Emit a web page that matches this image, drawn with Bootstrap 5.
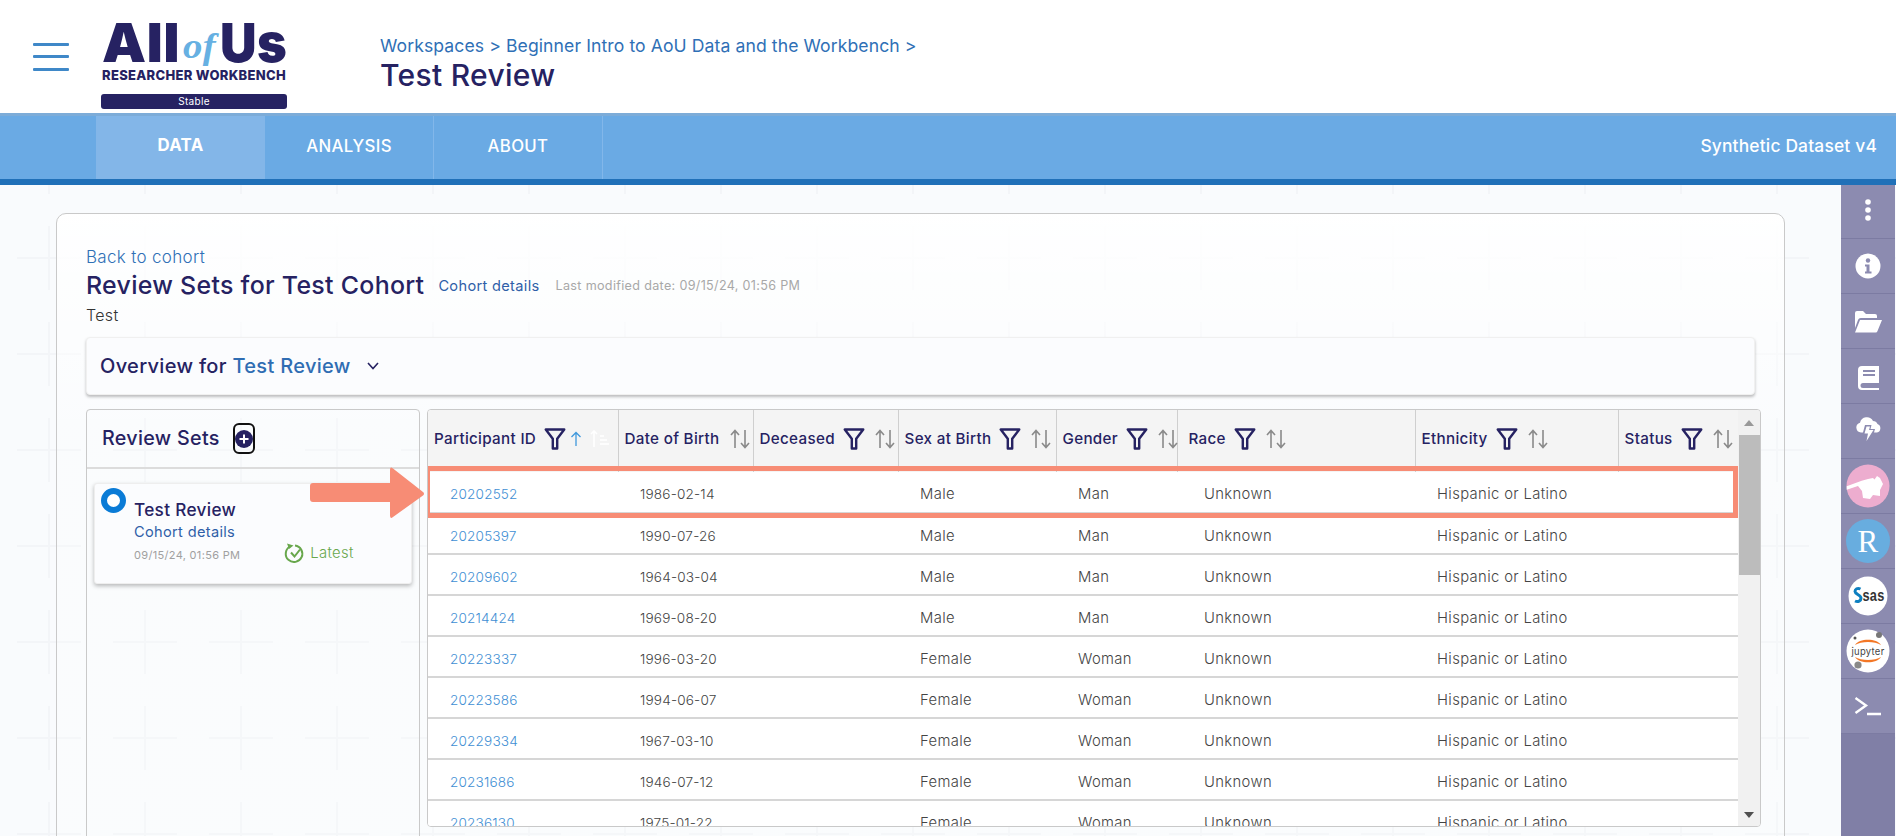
<!DOCTYPE html>
<html lang="en"><head><meta charset="utf-8"><title>Test Review</title>
<link href="https://cdn.jsdelivr.net/npm/bootstrap@5.3.0/dist/css/bootstrap.min.css" rel="stylesheet">
<style>
html,body{height:836px;overflow:hidden}
body{font-family:Inter,"Liberation Sans",sans-serif;color:#262262;background:#fff;letter-spacing:.02em}
a{text-decoration:none}
.top-head{height:113px;padding-left:33px}
.burger{width:36px;margin-right:31px}
.burger i{display:block;height:3px;background:#3f88c8;margin-bottom:9.5px;border-radius:1px}
.logo-box{width:190px;margin-right:91px;margin-left:-1px}
.logo-svg{display:block;width:190px;height:70px;margin-top:14px;overflow:visible}
.stable-bar{background:#262262;color:#fff;font-size:10px;height:15px;line-height:15px;border-radius:3px;text-align:center;width:186px;margin-left:2px;margin-top:10px}
.crumbs{color:#2f70b6;font-size:17.6px;font-weight:400;line-height:24px;letter-spacing:.005em}
.page-name{font-size:30px;font-weight:500;line-height:34px;color:#262262;letter-spacing:.01em}
.headtext{padding-top:34px}
.tabband{height:72px;background:#6aaae4;border-top:3px solid #7dacd8;border-bottom:6px solid #2070b8;color:#fff;padding-left:96px}
.tab-item{width:169px;height:63px;display:flex;align-items:center;justify-content:center;font-size:16.8px;font-weight:500;color:#fff;border-right:1px solid #82b7ea;padding-bottom:2px}
.tab-item.on{background:#83b6e8;font-weight:700;border-right:0;height:69px;border-bottom:6px solid #2070b8;margin-bottom:-6px;padding-bottom:4px}
.dataset{font-size:17.4px;font-weight:500;padding-right:19px;padding-bottom:2px;letter-spacing:.01em}
.work{height:651px;overflow:hidden;background-color:#f9fbfd;background-image:url("data:image/svg+xml,%3Csvg xmlns='http://www.w3.org/2000/svg' width='96' height='96'%3E%3Cpath d='M16 48h64M48 16v64' stroke='%23f3f5f8' stroke-width='2'/%3E%3C/svg%3E");background-position:1px 25px}
.pagepanel{margin:28px 56px 0 56px;flex:1;min-width:0;height:700px;border:1px solid #c9c9c9;border-radius:10px;padding:31px 24px 0 29px;background:linear-gradient(#fffffff2,#ffffff33 220px)}
.backlink{font-size:17px;font-weight:300;color:#2f70b6;line-height:24px}
.set-title{font-size:24.9px;font-weight:500;line-height:32px;letter-spacing:.012em}
.set-link{font-size:14.6px;color:#2f5fa8;margin-left:14px;padding-top:3px}
.set-date{font-size:12.6px;color:#a8a8a8;margin-left:16px;font-weight:400;padding-top:2px}
.desc{font-size:16px;color:#333;line-height:24px;margin-top:2px;font-weight:300}
.overview{height:58px;margin:10px 5px 0 0;background:#fbfcfe;border-radius:4px;box-shadow:0 2px 3px #00000040;border:1px solid #f0f0f0;padding-left:13px;font-size:20px;font-weight:500}
.overview span{color:#2f6db3}
.panes{margin-top:14px}
.leftpane{width:334px;height:500px;border:1px solid #c9c9c9;border-radius:4px 4px 0 0;margin-right:7px;flex:none}
.lefthead{height:59px;border-bottom:2px solid #dcdcdc;padding-left:15px;font-size:19.7px;font-weight:500}
.plusbtn{width:22px;height:31px;border:2px solid #111;border-radius:6px;margin-left:13px;display:flex;align-items:center;justify-content:center}
.setcard{margin:14px 7px 0 7px;height:101px;border-radius:3px;box-shadow:0 2px 4px #00000045;border:1px solid #eee;background:#fbfcfe;padding:4px 0 0 6px}
.radiomark{width:25px;height:25px;border:6px solid #0a7bd6;border-radius:50%;background:#fff;flex:none;margin-right:8px}
.set-name{font-size:17.2px;font-weight:500;line-height:22px;margin-top:11px}
.set-sub{font-size:14.6px;color:#2f5fa8;line-height:22px}
.set-stamp{font-size:11px;color:#a0a0a0;line-height:24px;font-weight:400}
.latest{color:#68a74c;font-size:14.8px;font-weight:300;margin-left:44px;position:relative;top:-2px}
.rightpane{width:1334px;height:418px;flex:none;border:1px solid #c9c9c9;border-radius:4px;overflow:hidden;background:#fff;position:relative}
.gridbox{width:1310px;flex:none}
.grid-t{table-layout:fixed;width:1310px;border-collapse:collapse;margin:0}
.grid-t th{height:62px;background:#f4f4f4;border-right:1px solid #cfcfcf;font-size:15.2px;font-weight:500;color:#262262;padding:0 0 3px 6px;vertical-align:middle;border-bottom:0;white-space:nowrap;box-shadow:none}
.grid-t th.rh{padding-left:11px}
.grid-t td{height:41px;padding:5px 0 0 22px;border:0;border-bottom:2px solid #d6d6d6;font-size:14.8px;font-weight:300;color:#444;vertical-align:middle;background:#fff;box-shadow:none;letter-spacing:.025em;white-space:nowrap}
.grid-t td:first-child{padding-left:22px}
.grid-t td.rc{padding-left:27px}
.grid-t td.nm{font-size:13.6px;letter-spacing:.012em}
.grid-t td a{color:#3f8fd4}
.hcell{display:flex;align-items:center}
.hcell svg{flex:none}
.fnl{margin-left:8px}
.srt{margin-left:10px}
.srt1{margin-left:11px}
.vbar{width:23px;background:#f1f1f1;flex:none;position:relative}
.vbar .thumb{position:absolute;left:1px;top:25px;width:21px;height:140px;background:#bcbcbc}
.vbar .tri{position:absolute;left:6px;width:0;height:0;border-left:5px solid transparent;border-right:5px solid transparent}
.vbar .up{top:10px;border-bottom:6px solid #999}
.vbar .dn{bottom:8px;border-top:6px solid #505050}
.hilite{position:absolute;left:-3px;top:56px;width:1313px;height:52px;border:5px solid #f78c75;pointer-events:none}
.callout{position:absolute;left:310px;top:466px;z-index:3}
.railbar{width:54px;margin-right:1px;flex:none;background:#807fa6}
.railitem{height:55px;background:#8c8bb0;border-bottom:1px solid #7c7ba2;display:flex;align-items:center;justify-content:center}
.railtop{height:54px}
</style></head><body>
<svg width="0" height="0" class="position-absolute">
<symbol id="fn" viewBox="0 0 20 20"><path d="M1.6 1.400h16.800l-6.400 8.400v8.800H8V9.800z" fill="none" stroke="#262262" stroke-width="2.200" stroke-linejoin="round"/></symbol>
<symbol id="so" viewBox="0 0 20 20"><path d="M5 19V1.500M1 6l4-4.500L9 6M15 1v17.500M11 14l4 4.500 4-4.500" fill="none" stroke="#8a8a8a" stroke-width="1.600"/></symbol>
</svg>
<header class="top-head d-flex align-items-start bg-white">
  <div class="burger align-self-center"><i></i><i></i><i class="mb-0"></i></div>
  <div class="logo-box">
    <svg class="logo-svg" viewBox="0 0 190 70"><text x="3" y="48" font-family="Inter" font-weight="900" font-size="54" fill="#262262" textLength="78" lengthAdjust="spacingAndGlyphs">All</text><text x="84" y="44" font-family="Liberation Serif" font-style="italic" font-weight="700" font-size="36" fill="#66b0e2" textLength="33" lengthAdjust="spacingAndGlyphs">of</text><text x="121" y="48" font-family="Inter" font-weight="900" font-size="54" fill="#262262" textLength="67" lengthAdjust="spacingAndGlyphs">Us</text><text x="3" y="66" font-family="Inter" font-weight="800" font-size="13.500" fill="#262262" textLength="184" lengthAdjust="spacingAndGlyphs">RESEARCHER WORKBENCH</text></svg>
    <div class="stable-bar">Stable</div>
  </div>
  <div class="headtext">
    <div class="crumbs">Workspaces &gt; Beginner Intro to AoU Data and the Workbench &gt;</div>
    <div class="page-name">Test Review</div>
  </div>
</header>
<nav class="tabband d-flex align-items-start">
  <a class="tab-item on" href="#">DATA</a><a class="tab-item" href="#">ANALYSIS</a><a class="tab-item" href="#">ABOUT</a>
  <div class="dataset ms-auto align-self-center">Synthetic Dataset v4</div>
</nav>
<div class="work d-flex position-relative">
  <main class="pagepanel">
    <a class="backlink d-block" href="#">Back to cohort</a>
    <div class="d-flex align-items-center"><span class="set-title">Review Sets for Test Cohort</span><a class="set-link" href="#">Cohort details</a><span class="set-date">Last modified date: 09/15/24, 01:56 PM</span></div>
    <div class="desc">Test</div>
    <div class="overview d-flex align-items-center">Overview for&nbsp;<span>Test Review</span>
      <svg class="ms-3" width="12" height="8" viewBox="0 0 12 8"><path d="M1 1l5 5.500L11 1" fill="none" stroke="#262262" stroke-width="1.600"/></svg>
    </div>
    <div class="panes d-flex align-items-start">
      <section class="leftpane">
        <div class="lefthead d-flex align-items-center">Review Sets
          <span class="plusbtn"><svg width="18" height="18" viewBox="0 0 18 18"><circle cx="9" cy="9" r="9" fill="#262262"/><path d="M9 4.500v9M4.500 9h9" stroke="#fff" stroke-width="2"/></svg></span>
        </div>
        <div class="setcard d-flex">
          <span class="radiomark"></span>
          <div class="flex-grow-1">
            <div class="set-name">Test Review</div>
            <a class="set-sub d-block" href="#">Cohort details</a>
            <div class="d-flex align-items-center"><span class="set-stamp">09/15/24, 01:56 PM</span><span class="latest d-inline-flex align-items-center"><svg width="22" height="22" viewBox="0 0 22 22" class="me-1"><path d="M6 4.500a8.300 8.300 0 1 0 5-1" fill="none" stroke="#68a74c" stroke-width="2"/><path d="M3 1.500l2 5.500 4.500-3.500z" fill="#68a74c"/><path d="M7 10.500l3.500 4L16 7.500" fill="none" stroke="#68a74c" stroke-width="2"/></svg>Latest</span></div>
          </div>
        </div>
      </section>
      <section class="rightpane d-flex">
        <div class="gridbox">
          <table class="table grid-t">
            <colgroup><col style="width:190px"><col style="width:135px"><col style="width:145px"><col style="width:158px"><col style="width:121px"><col style="width:238px"><col style="width:203px"><col style="width:120px"></colgroup>
            <thead><tr>
              <th><div class="hcell">Participant ID<svg class="fnl" width="22" height="22"><use href="#fn"/></svg><svg class="ms-1" width="12" height="16" viewBox="0 0 12 16"><path d="M6 15V1.500M1.500 6L6 1.500 10.500 6" fill="none" stroke="#3f98dc" stroke-width="1.300"/></svg><svg class="ms-2" width="20" height="18" viewBox="0 0 20 18"><path d="M4 17V1M1 4l3-3 3 3M10 6h4M10 10h7M10 14h9" fill="none" stroke="#fff" stroke-width="1.600"/></svg></div></th>
              <th><div class="hcell">Date of Birth<svg class="srt1" width="20" height="20"><use href="#so"/></svg></div></th>
              <th><div class="hcell">Deceased<svg class="fnl" width="22" height="22"><use href="#fn"/></svg><svg class="srt" width="20" height="20"><use href="#so"/></svg></div></th>
              <th><div class="hcell">Sex at Birth<svg class="fnl" width="22" height="22"><use href="#fn"/></svg><svg class="srt" width="20" height="20"><use href="#so"/></svg></div></th>
              <th><div class="hcell">Gender<svg class="fnl" width="22" height="22"><use href="#fn"/></svg><svg class="srt" width="20" height="20"><use href="#so"/></svg></div></th>
              <th class="rh"><div class="hcell">Race<svg class="fnl" width="22" height="22"><use href="#fn"/></svg><svg class="srt" width="20" height="20"><use href="#so"/></svg></div></th>
              <th><div class="hcell">Ethnicity<svg class="fnl" width="22" height="22"><use href="#fn"/></svg><svg class="srt" width="20" height="20"><use href="#so"/></svg></div></th>
              <th class="border-end-0"><div class="hcell">Status<svg class="fnl" width="22" height="22"><use href="#fn"/></svg><svg class="srt" width="20" height="20"><use href="#so"/></svg></div></th>
            </tr></thead>
            <tbody>
              <tr><td class="nm"><a href="#">20202552</a></td><td class="nm">1986-02-14</td><td></td><td>Male</td><td>Man</td><td class="rc">Unknown</td><td>Hispanic or Latino</td><td></td></tr>
              <tr><td class="nm"><a href="#">20205397</a></td><td class="nm">1990-07-26</td><td></td><td>Male</td><td>Man</td><td class="rc">Unknown</td><td>Hispanic or Latino</td><td></td></tr>
              <tr><td class="nm"><a href="#">20209602</a></td><td class="nm">1964-03-04</td><td></td><td>Male</td><td>Man</td><td class="rc">Unknown</td><td>Hispanic or Latino</td><td></td></tr>
              <tr><td class="nm"><a href="#">20214424</a></td><td class="nm">1969-08-20</td><td></td><td>Male</td><td>Man</td><td class="rc">Unknown</td><td>Hispanic or Latino</td><td></td></tr>
              <tr><td class="nm"><a href="#">20223337</a></td><td class="nm">1996-03-20</td><td></td><td>Female</td><td>Woman</td><td class="rc">Unknown</td><td>Hispanic or Latino</td><td></td></tr>
              <tr><td class="nm"><a href="#">20223586</a></td><td class="nm">1994-06-07</td><td></td><td>Female</td><td>Woman</td><td class="rc">Unknown</td><td>Hispanic or Latino</td><td></td></tr>
              <tr><td class="nm"><a href="#">20229334</a></td><td class="nm">1967-03-10</td><td></td><td>Female</td><td>Woman</td><td class="rc">Unknown</td><td>Hispanic or Latino</td><td></td></tr>
              <tr><td class="nm"><a href="#">20231686</a></td><td class="nm">1946-07-12</td><td></td><td>Female</td><td>Woman</td><td class="rc">Unknown</td><td>Hispanic or Latino</td><td></td></tr>
              <tr><td class="nm"><a href="#">20236130</a></td><td class="nm">1975-01-22</td><td></td><td>Female</td><td>Woman</td><td class="rc">Unknown</td><td>Hispanic or Latino</td><td></td></tr>
            </tbody>
          </table>
        </div>
        <div class="vbar"><i class="tri up"></i><i class="thumb"></i><i class="tri dn"></i></div>
        <div class="hilite"></div>
      </section>
    </div>
  </main>
  <aside class="railbar" aria-label="Tools">
    <div class="railitem railtop"><svg class="mb-1" width="8" height="24" viewBox="0 0 8 24"><circle cx="4" cy="4" r="2.800" fill="#fff"/><circle cx="4" cy="12" r="2.800" fill="#fff"/><circle cx="4" cy="20" r="2.800" fill="#fff"/></svg></div>
    <div class="railitem"><svg width="26" height="26" viewBox="0 0 26 26"><circle cx="13" cy="13" r="12.500" fill="#fff"/><circle cx="13" cy="7.500" r="2.200" fill="#8c8bb0"/><path d="M10 11.500h4.500v7H16.500v2h-6.500v-2h1.500v-5H10z" fill="#8c8bb0"/></svg></div>
    <div class="railitem"><svg width="28" height="23" viewBox="0 0 28 23"><path d="M1 18V3a2 2 0 0 1 2-2h6l3 3h9a2 2 0 0 1 2 2v2H7a3 3 0 0 0-3 2z" fill="#fff"/><path d="M6 10h22l-4.500 11a2 2 0 0 1-2 1.500H1z" fill="#fff"/></svg></div>
    <div class="railitem"><svg class="mt-1" width="21" height="24" viewBox="0 0 21 24"><path d="M4 0h17v17H5a2.500 2.500 0 0 0 0 5h16v2H4a4 4 0 0 1-4-4V4a4 4 0 0 1 4-4z" fill="#fff"/><path d="M5 5h12M5 9h12" stroke="#8c8bb0" stroke-width="2"/></svg></div>
    <div class="railitem"><svg class="mb-1" width="27" height="25" viewBox="0 0 27 25"><path d="M6 15.500a5 5 0 0 1-1-9.800A7 7 0 0 1 18 4a5 5 0 0 1 4.500 3.100A4.400 4.400 0 0 1 22 15.500h-3l1-3.500h-4.500l1-4h-6.500l-2 7.500z" fill="#fff"/><path d="M11.500 9.500h3.500l-1 3.500h4.500L11.500 24l1.500-7.500H9.500z" fill="#fff"/></svg></div>
    <div class="railitem"><svg width="44" height="44" viewBox="0 0 44 44"><circle cx="22" cy="22" r="21.500" fill="#edadcf"/><path d="M.7 22.300L15.700 16.700 22 15l5-1 1.500 1.500L31 12l3 2 3 6-3 6v6l-7-1-3 4-7-1-1-7-4-5-11.300 3.700z" fill="#fff"/></svg></div>
    <div class="railitem"><svg width="44" height="44" viewBox="0 0 44 44"><circle cx="22" cy="22" r="22" fill="#68addf"/><text x="22" y="33" text-anchor="middle" font-family="Liberation Serif" font-size="31" fill="#fff">R</text></svg></div>
    <div class="railitem"><svg width="40" height="40" viewBox="0 0 40 40"><circle cx="20" cy="20" r="19.500" fill="#fff"/><path d="M12.500 13c-3-1.500-5.500 0-5.500 2.500s6 3.500 6 6.500-3 4.500-6 3" fill="none" stroke="#0d7fc0" stroke-width="3"/><text x="14.500" y="25" font-family="Liberation Sans" font-weight="700" font-size="17" fill="#333" textLength="22" lengthAdjust="spacingAndGlyphs">sas</text></svg></div>
    <div class="railitem"><svg width="44" height="44" viewBox="0 0 44 44"><circle cx="22" cy="22" r="21.500" fill="#fff"/><path d="M9 16c4-7 22-7 26 0-6-4-20-4-26 0zM9 28c4 7 22 7 26 0-6 4-20 4-26 0z" fill="#f37726"/><text x="22" y="25.500" text-anchor="middle" font-family="Inter" font-size="10.500" fill="#444" textLength="33" lengthAdjust="spacingAndGlyphs">jupyter</text><circle cx="33" cy="6" r="3" fill="#777"/><circle cx="12" cy="36" r="3.600" fill="#888"/><circle cx="9" cy="9" r="1.500" fill="#555"/></svg></div>
    <div class="railitem"><svg width="28" height="20" viewBox="0 0 28 20"><path d="M1.500 2L12 9.500 1.500 17M13 18h14" fill="none" stroke="#fff" stroke-width="2.400"/></svg></div>
  </aside>
</div>
<svg class="callout" width="116" height="54" viewBox="0 0 116 54"><path d="M3 17H80V4q0-4 3-1.500L113 26q2 1.500 0 3.500L83 51q-3 2.500-3-1.500V36H3q-3 0-3-3V20q0-3 3-3z" fill="#f78c75"/></svg>
<script src="https://cdn.jsdelivr.net/npm/bootstrap@5.3.0/dist/js/bootstrap.bundle.min.js"></script>
</body></html>
